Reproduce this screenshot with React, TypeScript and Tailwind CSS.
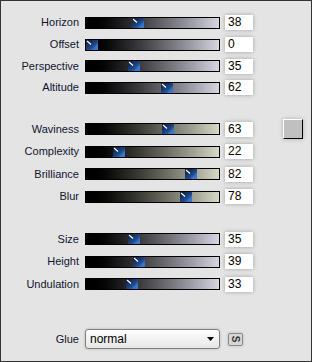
const groups = [
  {
    key: 'a',
    rowClass: 'h-[21.7px]',
    wrapClass: 'mt-0',
    track: 'bg-linear-to-r from-black to-[#d6d6e2]',
    rows: [
      ['Horizon', 38],
      ['Offset', 0],
      ['Perspective', 35],
      ['Altitude', 62],
    ] as [string, number][],
  },
  {
    key: 'b',
    rowClass: 'h-[22.5px]',
    wrapClass: 'mt-[19px]',
    track: 'bg-linear-to-r from-black to-[#d8d8c6]',
    rows: [
      ['Waviness', 63],
      ['Complexity', 22],
      ['Brilliance', 82],
      ['Blur', 78],
    ] as [string, number][],
  },
  {
    key: 'c',
    rowClass: 'h-[22.5px]',
    wrapClass: 'mt-[20px]',
    track: 'bg-linear-to-r from-black to-[#d6d6e2]',
    rows: [
      ['Size', 35],
      ['Height', 39],
      ['Undulation', 33],
    ] as [string, number][],
  },
]

function Thumb({ value }: { value: number }) {
  // inner track is 133px, thumb 12px wide
  const left = Math.round((value / 100) * 121)
  return (
    <svg className="absolute top-0" style={{ left }} width="12" height="10" viewBox="0 0 12 10">
      <defs>
        <linearGradient id="tg" x1="0" y1="0" x2="1" y2="1">
          <stop offset="0" stopColor="#0b1730" />
          <stop offset="0.55" stopColor="#1d4684" />
          <stop offset="1" stopColor="#3d7fd6" />
        </linearGradient>
      </defs>
      <rect x="0" y="0" width="12" height="10" fill="url(#tg)" />
      <polygon points="6,10 12,3 12,10" fill="#3b7ad0" opacity="0.7" />
      <line x1="1" y1="1" x2="5" y2="4.5" stroke="#ffffff" strokeWidth="1.2" />
    </svg>
  )
}

function SliderRow({ label, value, rowClass, track, extra }: { label: string; value: number; rowClass: string; track: string; extra?: boolean }) {
  return (
    <div className={`flex items-center ${rowClass}`}>
      <div className="w-[78px] text-right text-[11px] text-[#101530] leading-none">{label}</div>
      <div className={`relative ml-[6px] w-[135px] h-[12px] border border-black ${track}`}>
        <Thumb value={value} />
      </div>
      <div className="ml-[5px] w-[28px] h-[15px] bg-white pl-[3px] text-[12px] leading-[15px] text-black shadow-[0_0_4px_rgba(0,0,0,0.3)]">
        {value}
      </div>
      {extra && (
        <div className="ml-[30px] w-[20px] h-[20px] bg-[#c0c0c0] border border-t-white border-l-white border-r-black border-b-black shadow-[0_0_4px_rgba(0,0,0,0.25)]" />
      )}
    </div>
  )
}

export default function App() {
  return (
    <div className="w-[312px] h-[362px] bg-[#e4e4e4] border border-[#333333] pt-[11px] flex flex-col font-['Liberation_Sans',Arial,sans-serif]">
      {groups.map((g) => (
        <div key={g.key} className={g.wrapClass}>
          {g.rows.map(([label, value]) => (
            <SliderRow
              key={label}
              label={label}
              value={value}
              rowClass={g.rowClass}
              track={g.track}
              extra={label === 'Waviness'}
            />
          ))}
        </div>
      ))}

      <div className="mt-[34px] flex items-center h-[20px]">
        <div className="w-[78px] text-right text-[11px] text-[#101530] leading-none">Glue</div>
        <div className="ml-[6px] w-[135px] h-[20px] rounded-[3px] border border-[#7f7f7f] bg-linear-to-b from-white to-[#e6e6e6] flex items-center justify-between pl-[4px] pr-[5px] shadow-[0_0_3px_rgba(0,0,0,0.2)]">
          <span className="text-[12px] text-black leading-none">normal</span>
          <svg width="7" height="4" viewBox="0 0 7 4">
            <polygon points="0,0 7,0 3.5,4" fill="#000000" />
          </svg>
        </div>
        <div className="ml-[8px] w-[15px] h-[13px] rounded-[2px] border border-[#8a8a8a] bg-[#d6d6d6] flex items-center justify-center shadow-[0_0_3px_rgba(0,0,0,0.2)]">
          <span className="block rotate-90 text-[10px] font-bold leading-none text-[#333333]">S</span>
        </div>
      </div>
    </div>
  )
}
